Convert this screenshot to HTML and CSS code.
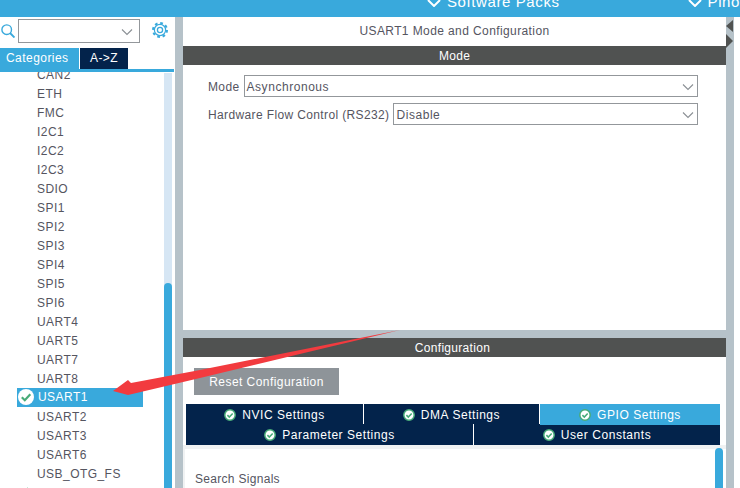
FILE: index.html
```html
<!DOCTYPE html>
<html lang="en">
<head>
<meta charset="utf-8">
<title>USART1 Mode and Configuration</title>
<link rel="stylesheet" href="styles.css">
</head>
<body>
<svg width="0" height="0" class="defs"><defs>
<symbol id="ok" viewBox="0 0 12 12"><circle cx="6" cy="6" r="5.2" fill="#fff" stroke="#48ab78" stroke-width="1.5"/><path d="M3.4 6.1 5.3 8 8.7 4.5" fill="none" stroke="#48ab78" stroke-width="1.6"/></symbol>
<symbol id="chev" viewBox="0 0 12 8"><path d="M1 1.5 6 6.5 11 1.5" fill="none" stroke="#8a8f94" stroke-width="1.1"/></symbol>
<symbol id="sel" viewBox="0 0 16 16"><circle cx="8" cy="8" r="8" fill="#fff"/><path d="M3.8 8.2 6.8 11.2 12.3 5.2" fill="none" stroke="#48ab78" stroke-width="2.2"/></symbol>
</defs></svg>
<div class="app">
  <header class="topbar">
    <div class="menu menu-packs"><svg class="menu-chev" viewBox="0 0 14 8"><path d="M1 1 7 7 13 1" fill="none" stroke="#fff" stroke-width="2"/></svg><span>Software Packs</span></div>
    <div class="menu menu-pino"><svg class="menu-chev" viewBox="0 0 14 8"><path d="M1 1 7 7 13 1" fill="none" stroke="#fff" stroke-width="2"/></svg><span>Pino</span></div>
  </header>
  <div class="workspace">
    <aside class="sidebar">
      <div class="search">
        <svg class="search-icon" viewBox="0 0 14 14"><circle cx="5.7" cy="5.7" r="4.8" fill="none" stroke="#39a9dc" stroke-width="1.4"/><path d="M9 9 13.500 13.500" stroke="#39a9dc" stroke-width="1.900"/></svg>
        <div class="search-box"><svg class="chev"><use href="#chev"/></svg></div>
        <svg class="gear" viewBox="0 0 16 16"><circle cx="8" cy="8" r="7" fill="none" stroke="#39a9dc" stroke-width="2" stroke-dasharray="2.750 2.750"/><circle cx="8" cy="8" r="5.600" fill="none" stroke="#39a9dc" stroke-width="1.200"/><circle cx="8" cy="8" r="2.600" fill="none" stroke="#39a9dc" stroke-width="1.300"/></svg>
      </div>
      <div class="side-tabs">
        <div class="side-tab side-tab-on">Categories</div>
        <div class="side-tab side-tab-off">A-&gt;Z</div>
      </div>
      <div class="list-wrap">
        <ul class="list">
          <li>CAN2</li><li>ETH</li><li>FMC</li><li>I2C1</li><li>I2C2</li><li>I2C3</li><li>SDIO</li><li>SPI1</li><li>SPI2</li><li>SPI3</li><li>SPI4</li><li>SPI5</li><li>SPI6</li><li>UART4</li><li>UART5</li><li>UART7</li><li>UART8</li>
          <li class="selected"><svg class="sel-ok"><use href="#sel"/></svg>USART1</li>
          <li>USART2</li><li>USART3</li><li>USART6</li><li>USB_OTG_FS</li><li class="enabled"><svg class="en-ok"><use href="#sel"/></svg>USB_OTG_HS</li>
        </ul>
        <div class="track"><div class="thumb"></div></div>
      </div>
    </aside>
    <div class="splitter"></div>
    <main class="main">
      <section class="mode">
        <h1 class="title">USART1 Mode and Configuration</h1>
        <h2 class="bar">Mode</h2>
        <div class="fields">
          <div class="field"><label>Mode</label><div class="select">Asynchronous<svg class="chev"><use href="#chev"/></svg></div></div>
          <div class="field"><label>Hardware Flow Control (RS232)</label><div class="select">Disable<svg class="chev"><use href="#chev"/></svg></div></div>
        </div>
      </section>
      <section class="config">
        <h2 class="bar bar-config">Configuration</h2>
        <div class="reset-row"><button class="reset">Reset Configuration</button></div>
        <div class="tabs">
          <div class="tab-row tab-row-1">
            <div class="tab"><svg class="ok"><use href="#ok"/></svg>NVIC Settings</div>
            <div class="tab"><svg class="ok"><use href="#ok"/></svg>DMA Settings</div>
            <div class="tab tab-on"><svg class="ok"><use href="#ok"/></svg>GPIO Settings</div>
          </div>
          <div class="tab-row tab-row-2">
            <div class="tab"><svg class="ok"><use href="#ok"/></svg>Parameter Settings</div>
            <div class="tab"><svg class="ok"><use href="#ok"/></svg>User Constants</div>
          </div>
        </div>
        <div class="signals">
          <div class="signals-text">Search Signals</div>
          <div class="sig-thumb"></div>
        </div>
      </section>
    </main>
    <div class="strip">
      <svg class="tri" viewBox="0 0 8 12"><path d="M7 0V12L0 6z" fill="#505251"/></svg>
      <svg class="tri tri-right" viewBox="0 0 8 14"><path d="M0 0V14L7 7z" fill="#505251"/></svg>
    </div>
    <div class="edge"></div>
  </div>
  <svg class="arrow" viewBox="0 0 740 488"><path d="M400 330 200 378 128 395 113 391 128 380 131 383 200 370z" fill="#f23b3f"/></svg>
</div>
</body>
</html>
```
FILE: styles.css
```css
* { box-sizing: border-box; }
html, body { margin: 0; padding: 0; background: #fff; }
body { font-family: "Liberation Sans", Arial, sans-serif; font-size: 12px; color: #55555f; }
.defs { position: absolute; }
.app { position: relative; width: 740px; height: 488px; overflow: hidden; display: flex; flex-direction: column; }
.topbar { height: 17px; flex: none; background: #39a9dc; display: flex; color: #fff; font-size: 15px; line-height: 16px; overflow: hidden; }
.menu { display: flex; align-items: flex-start; gap: 6px; height: 17px; margin-top: -6px; letter-spacing: .6px; }
.menu-packs { margin-left: 427px; width: 261px; }
.menu-chev { width: 14px; height: 8px; margin-top: 5px; flex: none; }
.workspace { flex: 1; display: flex; min-height: 0; }

.sidebar { width: 175px; flex: none; display: flex; flex-direction: column; }
.search { height: 31px; flex: none; display: flex; align-items: flex-start; padding-top: 2px; }
.search-icon { width: 14px; height: 14px; margin: 5px 3px 0 1px; flex: none; }
.search-box { width: 122px; height: 24px; border: 1px solid #93979b; position: relative; flex: none; }
.search-box .chev { top: 8px; right: 6px; }
.gear { width: 16px; height: 16px; margin: 3px 0 0 12px; flex: none; }
.chev { position: absolute; width: 12px; height: 8px; }
.side-tabs { height: 24px; flex: none; display: flex; border-bottom: 3px solid #39a9dc; width: 174px; letter-spacing: .45px; }
.side-tab { height: 21px; line-height: 21px; color: #fff; }
.side-tab-on { width: 79px; padding-left: 6px; background: #39a9dc; }
.side-tab-off { width: 48px; margin-left: 1px; text-align: center; background: #03234b; }
.list-wrap { flex: 1; min-height: 0; display: flex; overflow: hidden; }
.list { list-style: none; margin: -7px 0 0; padding: 0; width: 164px; flex: none; letter-spacing: .45px; }
.list li { height: 19px; line-height: 21px; padding-left: 37px; width: 143px; white-space: nowrap; position: relative; }
.list li.selected { background: #39a9dc; color: #fff; margin-left: 17px; width: 126px; padding-left: 21px; line-height: 19px; }
.list li.enabled { color: #48ab78; }
.sel-ok { position: absolute; left: 1px; top: 1px; width: 16px; height: 16px; }
.en-ok { position: absolute; left: 16px; top: 0; width: 16px; height: 16px; }
.track { width: 8px; flex: none; margin-top: 1px; background: #d6e6f4; padding-top: 210px; }
.thumb { height: 100%; background: #39a9dc; border-radius: 4px 4px 0 0; }

.splitter { width: 8px; flex: none; background: #b6c2c9; }
.main { width: 543px; flex: none; display: flex; flex-direction: column; background: #b6c2c9; }
.mode { height: 313px; flex: none; background: #fff; }
.title { height: 29px; margin: 0; font-size: 12px; font-weight: normal; line-height: 29px; text-align: center; letter-spacing: .4px; }
.bar { height: 19px; margin: 0; padding-top: 1px; background: #505251; color: #fff; font-size: 12px; font-weight: normal; line-height: 19px; text-align: center; letter-spacing: .3px; }
.bar-config { padding-right: 4px; }
.fields { padding: 10px 28px 0 25px; display: flex; flex-direction: column; gap: 6px; }
.field { display: flex; align-items: center; gap: 4px; height: 22px; letter-spacing: .37px; }
.field label { white-space: nowrap; padding-top: 2px; }
.select { flex: 1; height: 22px; border: 1px solid #93979b; line-height: 22px; padding-left: 2px; position: relative; letter-spacing: .55px; }
.select .chev { top: 7px; right: 3px; }
.config { height: 150px; margin-top: 8px; flex: 1; background: #fff; display: flex; flex-direction: column; }
.reset-row { height: 47px; flex: none; padding: 11px 0 0 11px; }
.reset { width: 145px; height: 27px; border: 0; padding: 0; background: #8e9499; color: #fff; font: 12px "Liberation Sans", Arial, sans-serif; letter-spacing: .45px; }
.tabs { margin: 0 6px 0 3px; flex: none; display: flex; flex-direction: column; }
.tab-row { display: grid; }
.tab-row-1 { height: 20px; grid-template-columns: 178px 176px 180px; }
.tab-row-2 { height: 21px; grid-template-columns: 288px 246px; }
.tab { background: #03234b; color: #fff; display: flex; align-items: center; justify-content: center; gap: 6px; letter-spacing: .55px; border-right: 1px solid #fff; }
.tab-row-1 .tab { border-bottom: 1px solid #fff; padding-top: 1px; }
.tab:last-child { border-right: 0; }
.tab-row-1 .tab-on { background: #39a9dc; border-bottom: 0; padding-top: 0; height: 21px; position: relative; }
.ok { width: 12px; height: 12px; flex: none; }
.signals { flex: 1; margin-top: 0; border-top: 4px solid #f0f2f3; border-left: 2px solid #f0f2f3; position: relative; padding: 23px 0 0 10px; letter-spacing: .3px; }
.sig-thumb { position: absolute; right: 3px; top: -1px; width: 8px; height: 60px; background: #39a9dc; border-radius: 4px 4px 0 0; }

.strip { width: 8px; flex: none; background: #b6c2c9; display: flex; flex-direction: column; gap: 2px; padding-top: 3px; }
.tri { width: 8px; height: 12px; display: block; }
.tri-right { height: 14px; }
.edge { flex: 1; background: #fff; }
.arrow { position: absolute; left: 0; top: 0; width: 740px; height: 488px; pointer-events: none; }
```
